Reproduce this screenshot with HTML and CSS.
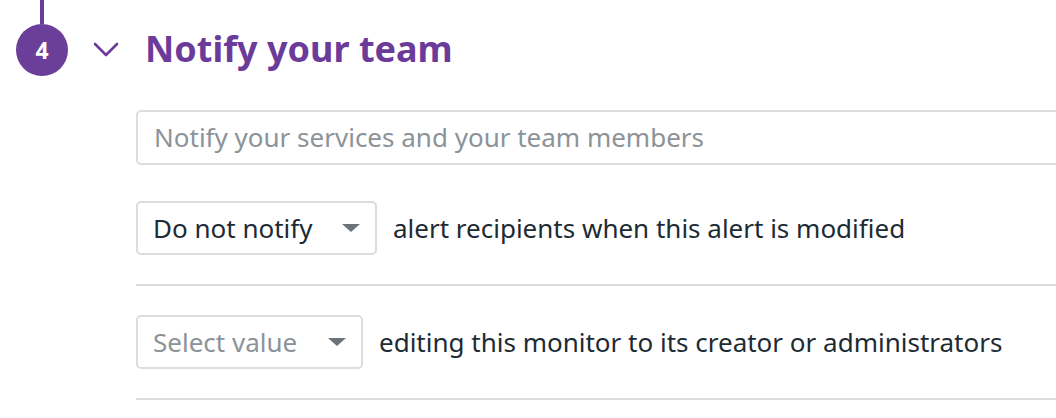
FILE: index.html
```html
<!DOCTYPE html>
<html>
<head>
<meta charset="utf-8">
<link rel="stylesheet" href="styles.css">
</head>
<body>
<section class="step">
  <div class="step-head">
    <div class="marker">
      <div class="connector"></div>
      <div class="badge">4</div>
    </div>
    <svg class="chevron" width="26" height="16" viewBox="0 0 26 16"><path d="M2 2 L13 13 L24 2" fill="none" stroke="#6b3b9a" stroke-width="2.6" stroke-linecap="round" stroke-linejoin="round"/></svg>
    <h2 class="title">Notify your team</h2>
  </div>
  <div class="content">
    <div class="input">Notify your services and your team members</div>
    <div class="row">
      <div class="select">
        <span class="value">Do not notify</span>
        <span class="caret"></span>
      </div>
      <span class="label">alert recipients when this alert is modified</span>
    </div>
    <div class="row row-second">
      <div class="select select-sm">
        <span class="value placeholder">Select value</span>
        <span class="caret"></span>
      </div>
      <span class="label">editing this monitor to its creator or administrators</span>
    </div>
  </div>
</section>
</body>
</html>
```

FILE: styles.css
```css
html, body {
  margin: 0;
  padding: 0;
  background: #fff;
  overflow: hidden;
}
body {
  font-family: "Noto Sans", "Open Sans", sans-serif;
  color: #1c2b34;
  width: 1056px;
  height: 418px;
}
.step-head {
  display: flex;
  align-items: flex-start;
  height: 76px;
}
.marker {
  display: flex;
  flex-direction: column;
  align-items: center;
  margin-left: 16px;
  width: 52px;
}
.connector {
  width: 4px;
  height: 24px;
  background: #6b3b9a;
}
.badge {
  width: 52px;
  height: 52px;
  border-radius: 50%;
  background: #6b3f99;
  color: #fff;
  font-weight: 700;
  font-size: 23px;
  display: flex;
  align-items: center;
  justify-content: center;
}
.chevron {
  margin-left: 25px;
  margin-top: 42px;
}
.title {
  margin: 0 0 0 26px;
  padding-top: 23px;
  font-size: 36px;
  line-height: 52px;
  font-weight: 700;
  color: #6b3b9a;
  letter-spacing: 0;
}
.content {
  margin-left: 136px;
  margin-right: -20px;
  padding-top: 34px;
}
.input {
  height: 51px;
  border: 2px solid #dcdce1;
  border-radius: 5px;
  padding-left: 16px;
  font-size: 26px;
  line-height: 51px;
  color: #8c9398;
}
.row {
  display: flex;
  align-items: center;
  padding: 36px 0 29px;
  border-bottom: 2px solid #dcdce1;
}
.row-second {
  padding: 29px 0 29px;
}
.select {
  box-sizing: border-box;
  width: 241px;
  height: 54px;
  border: 2px solid #dcdce1;
  border-radius: 5px;
  display: flex;
  align-items: center;
  justify-content: space-between;
  padding: 0 15px 0 15px;
  flex-shrink: 0;
}
.select-sm {
  width: 227px;
}
.value {
  font-size: 26px;
  color: #1c2b34;
}
.placeholder {
  color: #8c9398;
}
.caret {
  width: 0;
  height: 0;
  border-left: 9px solid transparent;
  border-right: 9px solid transparent;
  border-top: 8px solid #6c7479;
}
.label {
  margin-left: 16px;
  font-size: 26px;
  color: #1c2b34;
}
```
